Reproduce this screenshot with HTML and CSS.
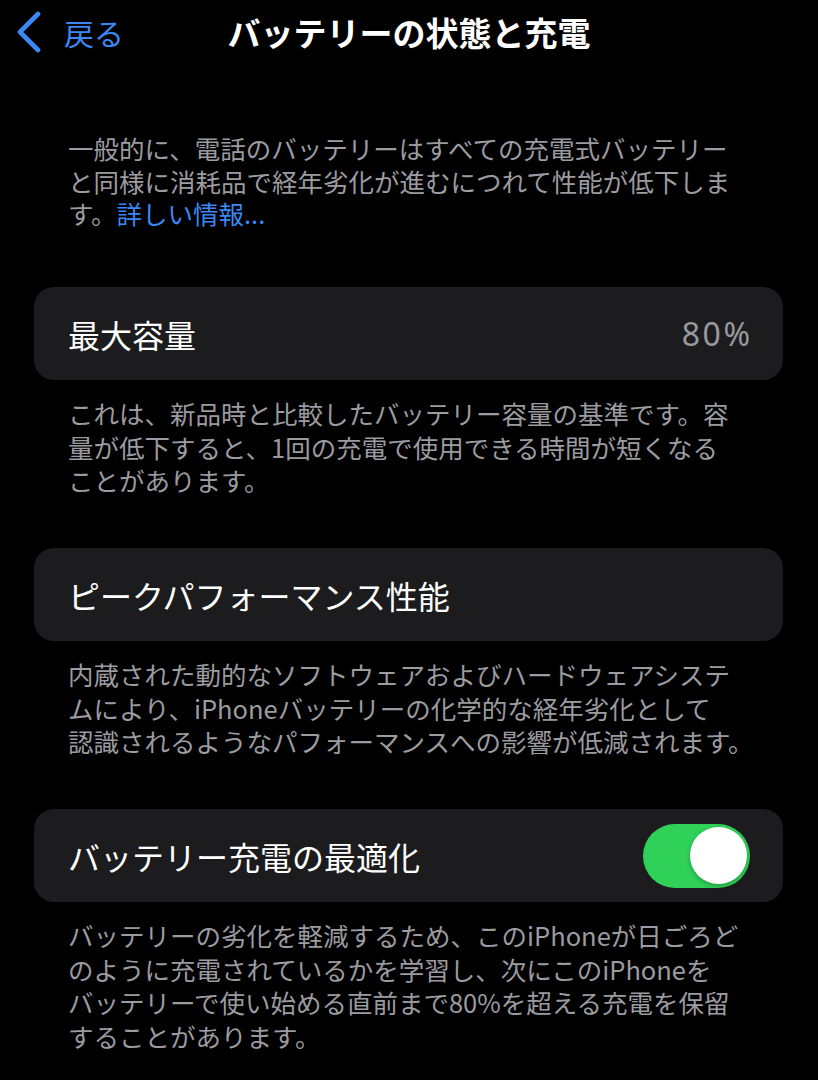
FILE: index.html
```html
<!DOCTYPE html>
<html lang="ja">
<head>
<meta charset="utf-8">
<title>バッテリーの状態と充電</title>
<link rel="stylesheet" href="styles.css">
</head>
<body>
<div class="screen">
  <header class="nav">
    <a class="back" href="#">
      <svg class="chevron" width="26" height="42" viewBox="0 0 26 42" aria-hidden="true">
        <polyline points="22,3 4,21 22,39" fill="none" stroke="#3a88f5" stroke-width="4.6" stroke-linecap="round" stroke-linejoin="round"/>
      </svg>
      <span class="back-label">戻る</span>
    </a>
    <h1 class="nav-title">バッテリーの状態と充電</h1>
  </header>

  <p class="intro">一般的に、電話のバッテリーはすべての充電式バッテリー<br>と同様に消耗品で経年劣化が進むにつれて性能が低下しま<br>す。<a class="link" href="#">詳しい情報...</a></p>

  <section class="group">
    <div class="card">
      <span class="card-label">最大容量</span>
      <span class="card-value">80%</span>
    </div>
    <p class="footnote">これは、新品時と比較したバッテリー容量の基準です。容<br>量が低下すると、1回の充電で使用できる時間が短くなる<br>ことがあります。</p>
  </section>

  <section class="group">
    <div class="card">
      <span class="card-label">ピークパフォーマンス性能</span>
    </div>
    <p class="footnote">内蔵された動的なソフトウェアおよびハードウェアシステ<br>ムにより、iPhoneバッテリーの化学的な経年劣化として<br>認識されるようなパフォーマンスへの影響が低減されます。</p>
  </section>

  <section class="group">
    <div class="card">
      <span class="card-label">バッテリー充電の最適化</span>
      <span class="toggle on"><span class="knob"></span></span>
    </div>
    <p class="footnote">バッテリーの劣化を軽減するため、このiPhoneが日ごろど<br>のように充電されているかを学習し、次にこのiPhoneを<br>バッテリーで使い始める直前まで80%を超える充電を保留<br>することがあります。</p>
  </section>
</div>
</body>
</html>
```

FILE: styles.css
```css
html, body {
  margin: 0;
  padding: 0;
  background: #000;
}

body {
  font-family: "Noto Sans CJK JP", "Noto Sans", sans-serif;
  color: #fff;
  width: 818px;
  height: 1080px;
  overflow: hidden;
}

.screen {
  display: flex;
  flex-direction: column;
}

.nav {
  position: relative;
  height: 64px;
  display: flex;
  align-items: center;
}

.back {
  display: flex;
  align-items: center;
  gap: 22px;
  padding-left: 16px;
  text-decoration: none;
  color: #3a88f5;
  position: relative;
  z-index: 1;
}

.chevron {
  display: block;
}

.back-label {
  font-size: 30px;
  line-height: 1;
}

.nav-title {
  position: absolute;
  left: 0;
  right: 0;
  top: 0;
  height: 64px;
  margin: 0;
  display: flex;
  align-items: center;
  justify-content: center;
  font-size: 33px;
  font-weight: 700;
}

.intro {
  margin: 68px 0 0;
  padding: 0 0 0 68px;
  font-size: 25.5px;
  line-height: 32.5px;
  color: #9b9ba0;
  white-space: nowrap;
}

.link {
  color: #3a88f5;
  text-decoration: none;
}

.group {
  margin-top: 57.5px;
}

.group + .group {
  margin-top: 51.5px;
}

.card {
  margin: 0 35px 0 34px;
  height: 93px;
  box-sizing: border-box;
  padding: 0 33px 0 34px;
  border-radius: 20px;
  background: #1c1c1e;
  display: flex;
  align-items: center;
  justify-content: space-between;
}

.card-label {
  font-size: 32px;
  color: #fff;
}

.card-value {
  font-size: 32px;
  letter-spacing: 2.5px;
  margin-right: -2.5px;
  color: #98989e;
  font-family: "Noto Sans", "Noto Sans CJK JP", sans-serif;
}

.toggle {
  width: 107px;
  height: 64px;
  border-radius: 32px;
  background: #30d158;
  display: flex;
  align-items: center;
  justify-content: flex-end;
  padding: 0 3px;
  box-sizing: border-box;
}

.knob {
  width: 57px;
  height: 57px;
  border-radius: 50%;
  background: #fff;
  box-shadow: 0 2px 5px rgba(0,0,0,0.25);
}

.footnote {
  margin: 16px 0 0;
  padding-left: 68px;
  font-size: 25.5px;
  line-height: 33.5px;
  color: #9b9ba0;
  white-space: nowrap;
}
```
